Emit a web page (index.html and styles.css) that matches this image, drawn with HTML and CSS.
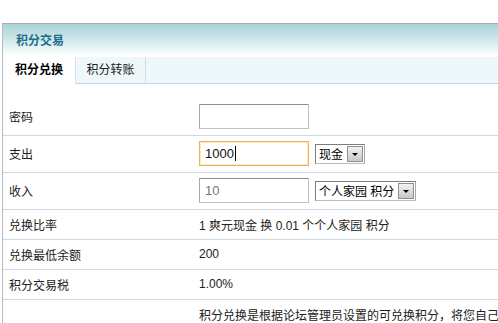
FILE: index.html
```html
<!DOCTYPE html>
<html lang="zh-CN">
<head>
    <meta charset="UTF-8">
    <title>积分交易</title>
    <link rel="stylesheet" href="styles.css">
</head>
<body>
    <div class="page">
        <div class="box">
            <div class="box-title">积分交易</div>
            <div class="tabs">
                <div class="tab active">积分兑换</div>
                <div class="tab">积分转账</div>
            </div>
            <table class="form-table">
                <colgroup>
                    <col class="col-label">
                    <col>
                </colgroup>
                <tr>
                    <td class="label">密码</td>
                    <td><div class="field"></div></td>
                </tr>
                <tr>
                    <td class="label">支出</td>
                    <td>
                        <div class="inline">
                            <div class="field focus">1000<span class="caret"></span></div>
                            <div class="select sel-small">现金<span class="arrow"></span></div>
                        </div>
                    </td>
                </tr>
                <tr>
                    <td class="label">收入</td>
                    <td>
                        <div class="inline">
                            <div class="field muted">10</div>
                            <div class="select sel-wide">个人家园 积分<span class="arrow"></span></div>
                        </div>
                    </td>
                </tr>
                <tr class="short">
                    <td class="label">兑换比率</td>
                    <td>1 爽元现金 换 0.01 个个人家园 积分</td>
                </tr>
                <tr class="short">
                    <td class="label">兑换最低余额</td>
                    <td>200</td>
                </tr>
                <tr class="short">
                    <td class="label">积分交易税</td>
                    <td>1.00%</td>
                </tr>
                <tr class="short last">
                    <td class="label"></td>
                    <td class="note">积分兑换是根据论坛管理员设置的可兑换积分，将您自己</td>
                </tr>
            </table>
        </div>
    </div>
</body>
</html>
```

FILE: styles.css
```css
* {
    margin: 0;
    padding: 0;
    box-sizing: border-box;
}

html, body {
    width: 498px;
    height: 323px;
    overflow: hidden;
}

body {
    font-family: 'Liberation Sans', 'Noto Sans CJK SC', sans-serif;
    font-size: 12px;
    color: #222;
    background: #fff;
}

.page {
    padding: 23px 0 0 2px;
    overflow: hidden;
    height: 323px;
}

.box {
    width: 560px;
    height: 300px;
    border-top: 1px solid #a4aeb1;
    border-left: 1px solid #b4bcbf;
}

/* title bar */
.box-title {
    height: 33px;
    line-height: 34px;
    padding-left: 13px;
    font-weight: bold;
    color: #1e6d8c;
    background: linear-gradient(#a7d3d7, #d5ecee 55%, #ffffff 95%);
}

/* tabs */
.tabs {
    display: flex;
    height: 27px;
    background: #eef7fa;
    border-bottom: 1px solid #c6d5dd;
}

.tab {
    width: 70px;
    height: 26px;
    line-height: 27px;
    text-align: center;
    font-size: 12px;
    border-right: 1px solid #cfdee6;
}

.tab.active {
    width: 73px;
    height: 27px;
    background: #fff;
    font-weight: bold;
    color: #000;
    border-right: 1px solid #d7e3e9;
}

/* form rows */
.form-table {
    width: 100%;
    table-layout: fixed;
    border-collapse: collapse;
    margin-top: 14px;
}

.col-label {
    width: 196px;
}

.form-table td {
    height: 37px;
    border-bottom: 1px solid #ccdae5;
    vertical-align: middle;
    white-space: nowrap;
    overflow: hidden;
}

.form-table tr.short td {
    height: 30px;
}

.form-table tr.last td {
    border-bottom: none;
}

.form-table td.label {
    padding-left: 6px;
    font-size: 12px;
}

.inline {
    display: flex;
    align-items: center;
}

.field {
    width: 110px;
    height: 25px;
    line-height: 23px;
    padding-left: 5px;
    font-size: 13px;
    color: #111;
    border: 1px solid #c2c2c2;
    border-top-color: #8d8d8d;
    border-left-color: #a8a8a8;
}

.field.focus {
    border: 1px solid #e7b35c;
    box-shadow: inset 0 0 0 1px #fbe9c4;
}

.field.muted {
    color: #777;
}

.caret {
    display: inline-block;
    width: 1px;
    height: 15px;
    margin-left: 1px;
    background: #000;
    vertical-align: -3px;
}

.select {
    display: flex;
    align-items: center;
    justify-content: space-between;
    height: 20px;
    margin-left: 6px;
    padding: 0 1px 0 3px;
    font-size: 12px;
    color: #000;
    border: 1px solid #7d7d7d;
    border-right-color: #a9a9a9;
    border-bottom-color: #bdbdbd;
}

.sel-small {
    width: 50px;
}

.sel-wide {
    width: 101px;
}

.arrow {
    position: relative;
    width: 16px;
    height: 16px;
    background: linear-gradient(#f2f2f2, #c8c8c8);
    border: 1px solid #8f8f8f;
}

.arrow::after {
    content: '';
    position: absolute;
    left: 4px;
    top: 6px;
    border-left: 3px solid transparent;
    border-right: 3px solid transparent;
    border-top: 3px solid #000;
}

.note {
    font-size: 12px;
}
```
